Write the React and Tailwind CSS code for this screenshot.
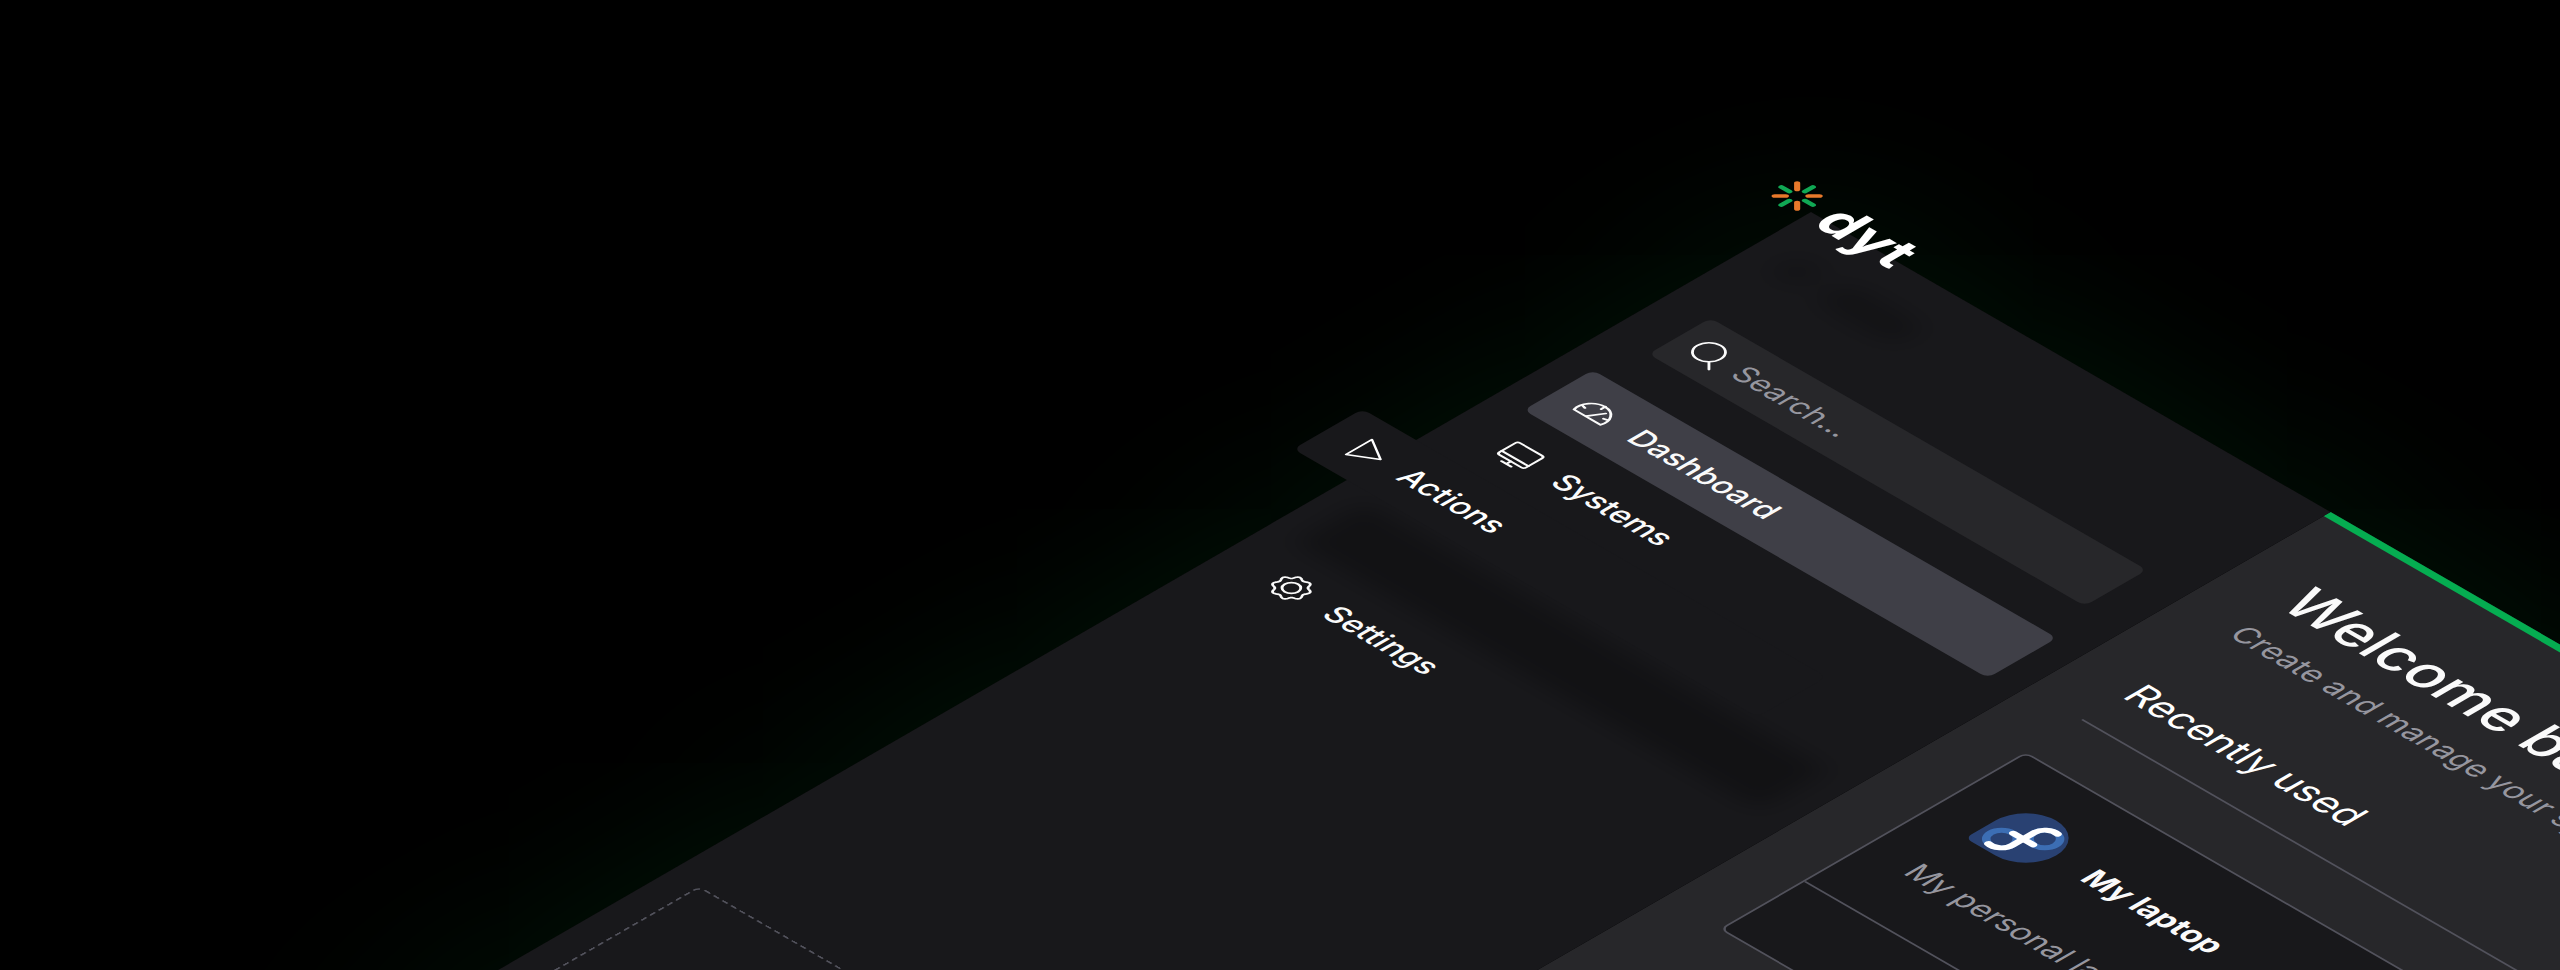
import React from "react";

function LogoMark() {
  return (
    <svg viewBox="0 0 48 48" className="size-12" fill="none" strokeWidth="5" strokeLinecap="round" aria-hidden="true">
      <path stroke="#10a854" d="M24 5.800v9.200M24 33v9.200M5.800 24H15M33 24h9.200" />
      <path stroke="#e8792b" d="M11 11l6.500 6.500M30.500 30.500L37 37M37 11l-6.500 6.500M17.500 30.500L11 37" />
    </svg>
  );
}

function Icon({ children, weight = 1.4 }) {
  return (
    <svg
      viewBox="0 0 24 24"
      className="size-10 shrink-0"
      fill="none"
      stroke="currentColor"
      strokeWidth={weight}
      strokeLinecap="round"
      strokeLinejoin="round"
      aria-hidden="true"
    >
      {children}
    </svg>
  );
}

const GaugeIcon = () => (
  <Icon>
    <path d="M2.800 18.200A9.600 9.600 0 1 1 21.200 18.200Z" />
    <path d="M11 18l5.200-8.400M3.200 12.800l2.500.7M12 5.600v3M21 12.800l-2.500.7" />
  </Icon>
);

const MonitorIcon = () => (
  <Icon>
    <rect x="2.600" y="4.200" width="18.400" height="14.200" rx="1.600" />
    <path d="M2.600 15.200H21M12 18.400v3.100M8.700 21.500h6.600" />
  </Icon>
);

const PlayIcon = () => (
  <Icon weight={1.2}>
    <path d="M7.200 3l15 9-15 9z" />
  </Icon>
);

const gearOutline =
  Array.from({ length: 96 }, (_, i) => {
    const angle = (i / 96) * Math.PI * 2;
    const radius = 9 - 0.9 * Math.cos(8 * angle);
    const x = 12 + radius * Math.cos(angle);
    const y = 12 + radius * Math.sin(angle);
    return `${i ? "L" : "M"}${x.toFixed(2)} ${y.toFixed(2)}`;
  }).join("") + "Z";

const GearIcon = () => (
  <Icon>
    <circle cx="12" cy="12" r="4.600" />
    <path d={gearOutline} />
  </Icon>
);

const SearchIcon = () => (
  <Icon>
    <circle cx="10.400" cy="11.500" r="8.100" />
    <path d="M16.200 17.300l4.600 4.600" />
  </Icon>
);

function FedoraIcon() {
  return (
    <svg viewBox="0 0 72 72" className="size-18 shrink-0" fill="none" aria-hidden="true">
      <path d="M36 1a35 35 0 1 1 0 70H8a7 7 0 0 1-7-7V36A35 35 0 0 1 36 1z" fill="#294172" />
      <g strokeWidth="7" strokeLinecap="round">
        <circle cx="23" cy="51" r="12.500" stroke="#3c6eb4" />
        <circle cx="48" cy="26" r="12.500" stroke="#3c6eb4" />
        <path
          d="M20 63.200A12.500 12.500 0 0 0 35.500 51V26A12.500 12.500 0 0 1 50.500 13.700M24 38.500H47"
          stroke="#fff"
        />
      </g>
    </svg>
  );
}

function NavItem({ icon, label, className = "" }) {
  return (
    <a
      href="#"
      className={`flex h-20 items-center gap-6 rounded-lg px-6 text-[31px] leading-10 font-medium ${className}`}
    >
      {icon}
      {label}
    </a>
  );
}

function Sidebar() {
  return (
    <aside className="relative z-10 flex w-[600px] shrink-0 flex-col bg-zinc-900 px-8 text-zinc-50">
      <div className="relative h-[164px]">
        <div className="absolute top-12 left-0 flex gap-4 blur-md">
          <div className="size-10 rounded-full bg-black/15" />
          <div className="h-10 w-24 rounded-full bg-black/20" />
        </div>
        <div className="relative flex -translate-x-20 -translate-y-[84px] items-center gap-3 pt-12 text-white">
          <LogoMark />
          <span className="text-[56px] leading-none font-bold">dyt</span>
        </div>
      </div>
      <label className="mx-4 flex h-18 items-center gap-3 rounded-lg bg-zinc-800 px-4">
        <SearchIcon />
        <input
          type="search"
          aria-label="Search"
          placeholder="Search..."
          className="w-full bg-transparent text-[30px] leading-10 outline-none placeholder:text-[#96969f]"
        />
      </label>
      <nav className="mt-12">
        <ul className="flex flex-col gap-2">
          <li>
            <NavItem icon={<GaugeIcon />} label="Dashboard" className="bg-zinc-700" />
          </li>
          <li>
            <NavItem icon={<MonitorIcon />} label="Systems" />
          </li>
          <li className="relative mt-22">
            <div className="absolute inset-0 rounded-lg bg-black/25 blur-md" />
            <NavItem
              icon={<PlayIcon />}
              label="Actions"
              className="relative -translate-x-[94px] -translate-y-[92px] bg-zinc-900 text-white"
            />
          </li>
          <li>
            <NavItem icon={<GearIcon />} label="Settings" />
          </li>
        </ul>
      </nav>
      <div className="mt-[600px] h-80 rounded-lg border-2 border-dashed border-zinc-600" />
    </aside>
  );
}

function SystemCard() {
  return (
    <article className="rounded-lg border-2 border-zinc-600 bg-zinc-900">
      <div className="flex h-[254px] flex-col gap-10 p-12">
        <div className="flex items-center gap-9">
          <FedoraIcon />
          <h3 className="text-[31px] leading-10 font-bold">My laptop</h3>
        </div>
        <p className="text-[31px] leading-10 text-[#96969f]">My personal laptop</p>
      </div>
      <div className="h-24 border-t-2 border-zinc-600" />
    </article>
  );
}

function Main() {
  return (
    <main className="grow border-t-8 border-[#05ad51] bg-zinc-800 px-16 pt-15 text-zinc-50">
      <h1 className="text-[58px] leading-[72px] font-medium">Welcome back</h1>
      <p className="mt-3 text-[31px] leading-10 text-[#96969f]">Create and manage your systems</p>
      <section className="mt-[76px]">
        <h2 className="border-b-2 border-zinc-600 pb-[34px] text-[39px] leading-[48px] text-white">Recently used</h2>
        <div className="mt-16 grid grid-cols-2 gap-16">
          <SystemCard />
          <SystemCard />
        </div>
      </section>
    </main>
  );
}

export default function App() {
  return (
    <div className="h-screen overflow-hidden bg-black font-['Inter',sans-serif]">
      <div className="mt-[212px] ml-[1811px] flex min-h-[1900px] w-[2400px] origin-top-left transform-[matrix(0.866,0.5,-0.866,0.5,0,0)] shadow-[0_0_180px_rgba(0,80,30,0.27)]">
        <Sidebar />
        <Main />
      </div>
    </div>
  );
}
